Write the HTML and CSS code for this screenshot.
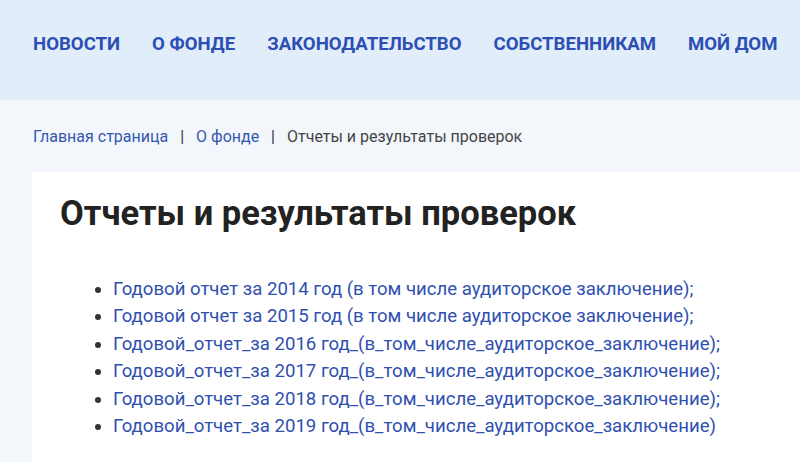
FILE: index.html
```html
<!DOCTYPE html>
<html lang="ru">
<head>
    <meta charset="UTF-8">
    <title>Отчеты и результаты проверок</title>
    <link rel="stylesheet" href="styles.css">
</head>
<body>
<header class="top-menu">
    <a href="#">НОВОСТИ</a>
    <a href="#">О ФОНДЕ</a>
    <a href="#">ЗАКОНОДАТЕЛЬСТВО</a>
    <a href="#">СОБСТВЕННИКАМ</a>
    <a href="#">МОЙ ДОМ</a>
</header>

<div class="crumbs">
    <a href="#">Главная страница</a>
    <span class="sep">|</span>
    <a href="#">О фонде</a>
    <span class="sep">|</span>
    <span class="current">Отчеты и результаты проверок</span>
</div>

<div class="content">
    <h1>Отчеты и результаты проверок</h1>
    <ul class="reports">
        <li><a href="#">Годовой отчет за 2014 год (в том числе аудиторское заключение);</a></li>
        <li><a href="#">Годовой отчет за 2015 год (в том числе аудиторское заключение);</a></li>
        <li><a href="#">Годовой_отчет_за 2016 год_(в_том_числе_аудиторское_заключение);</a></li>
        <li><a href="#">Годовой_отчет_за 2017 год_(в_том_числе_аудиторское_заключение);</a></li>
        <li><a href="#">Годовой_отчет_за 2018 год_(в_том_числе_аудиторское_заключение);</a></li>
        <li><a href="#">Годовой_отчет_за 2019 год_(в_том_числе_аудиторское_заключение)</a></li>
    </ul>
</div>
</body>
</html>
```

FILE: styles.css
```css
html, body {
    margin: 0;
    padding: 0;
}
body {
    background-color: #f3f7fc;
    font-family: Roboto, "Liberation Sans", sans-serif;
    height: 462px;
    overflow: hidden;
}
a {
    text-decoration: none;
}
.top-menu {
    height: 100px;
    box-sizing: border-box;
    padding: 34px 0 0 33px;
    background-color: #e2edfa;
    display: flex;
    gap: 32px;
    white-space: nowrap;
}
.top-menu a {
    color: #2c4fb3;
    font-size: 18.6px;
    line-height: 21px;
    font-weight: bold;
}
.crumbs {
    padding: 27px 0 0 33px;
    height: 45px;
    font-size: 16px;
    line-height: 19px;
    color: #444;
}
.crumbs a {
    color: #3557b0;
}
.crumbs .sep {
    margin: 0 8px;
    color: #333;
}
.content {
    margin-left: 32px;
    background-color: #fff;
    padding: 21px 0 0 28px;
    height: 290px;
}
.content h1 {
    margin: 0;
    font-size: 34.5px;
    line-height: 40px;
    font-weight: bold;
    color: #222;
}
.reports {
    margin: 43px 0 0 0;
    padding-left: 53px;
    font-size: 18.6px;
    line-height: 27.4px;
    color: #333;
    white-space: nowrap;
}
.reports a {
    color: #2f50b0;
}
```
